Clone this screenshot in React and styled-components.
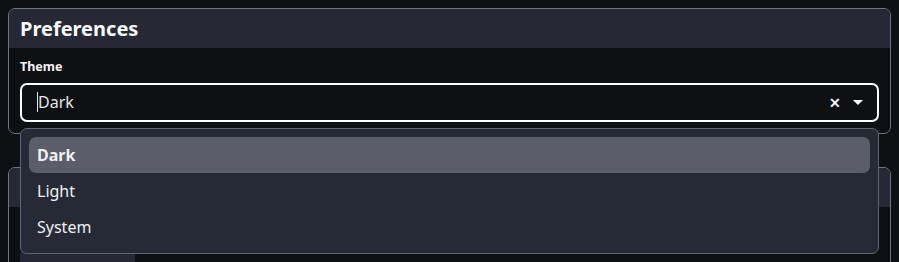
import React, { useState } from 'react';
import styled, { createGlobalStyle } from 'styled-components';

const GlobalStyle = createGlobalStyle`
    html, body {
        margin: 0;
        background: #0f1014;
        font-family: "Noto Sans", "Open Sans", sans-serif;
        color: #f3f4f6;
    }
`;

const Page = styled.div`
    display: flex;
    flex-direction: column;
    gap: 33px;
    height: 262px;
    overflow: hidden;
    padding: 8px;
    box-sizing: border-box;
`;

const Card = styled.section`
    border: 1px solid #6b7489;
    border-radius: 7px;
    background: #0f1014;
    flex-shrink: 0;
`;

const CardHead = styled.header`
    background: #262933;
    border-radius: 6px 6px 0 0;
    height: 39px;
    display: flex;
    align-items: center;
    padding: 0 11px;
`;

const Title = styled.h2`
    margin: 0;
    font-size: 20px;
    font-weight: 700;
    color: #f9fafb;
`;

const CardBody = styled.div`
    padding: 11px 11px 11px 11px;
    position: relative;
`;

const Label = styled.label`
    display: block;
    font-size: 12.5px;
    font-weight: 700;
    line-height: 16px;
    margin-bottom: 8px;
`;

const Field = styled.div`
    position: relative;
`;

const Control = styled.div`
    height: 39px;
    box-sizing: border-box;
    border: 2px solid #ffffff;
    border-radius: 7px;
    display: flex;
    align-items: center;
    padding: 0 14px 0 15px;
`;

const Value = styled.span`
    flex: 1;
    font-size: 16px;
    color: #e5e7eb;
    border-left: 1px solid #e5e7eb;
    line-height: 20px;
    margin-top: -1px;
`;

const Clear = styled.span`
    font-size: 14px;
    color: #ffffff;
    margin-right: 12px;
    line-height: 1;
    -webkit-text-stroke: 0.4px #ffffff;
`;

const Caret = styled.span`
    width: 0;
    height: 0;
    border-left: 5px solid transparent;
    border-right: 5px solid transparent;
    border-top: 5px solid #ffffff;
`;

const Menu = styled.ul`
    position: absolute;
    top: 45px;
    left: 0;
    right: 0;
    margin: 0;
    padding: 8px;
    list-style: none;
    background: #262a34;
    border: 1px solid #5d6679;
    border-radius: 7px;
    z-index: 2;
`;

const Option = styled.li`
    height: 36px;
    display: flex;
    align-items: center;
    padding: 0 8px;
    border-radius: 7px;
    font-size: 16px;
    font-weight: ${p => (p.$active ? 700 : 400)};
    background: ${p => (p.$active ? '#5b5e68' : 'transparent')};
    color: #eef0f3;
`;

const Placeholder = styled.div`
    width: 115px;
    height: 30px;
    margin-top: 15px;
    border-radius: 6px;
    background: #262933;
`;

const options = ['Dark', 'Light', 'System'];

export default function App() {
    const [theme] = useState('Dark');

    return (
        <>
            <GlobalStyle />
            <Page>
                <Card>
                    <CardHead>
                        <Title>Preferences</Title>
                    </CardHead>
                    <CardBody>
                        <Label>Theme</Label>
                        <Field>
                            <Control>
                                <Value>{theme}</Value>
                                <Clear>✕</Clear>
                                <Caret />
                            </Control>
                            <Menu>
                                {options.map(o => (
                                    <Option key={o} $active={o === theme}>{o}</Option>
                                ))}
                            </Menu>
                        </Field>
                    </CardBody>
                </Card>
                <Card>
                    <CardHead />
                    <CardBody>
                        <Label>&nbsp;</Label>
                        <Placeholder />
                    </CardBody>
                </Card>
            </Page>
        </>
    );
}
